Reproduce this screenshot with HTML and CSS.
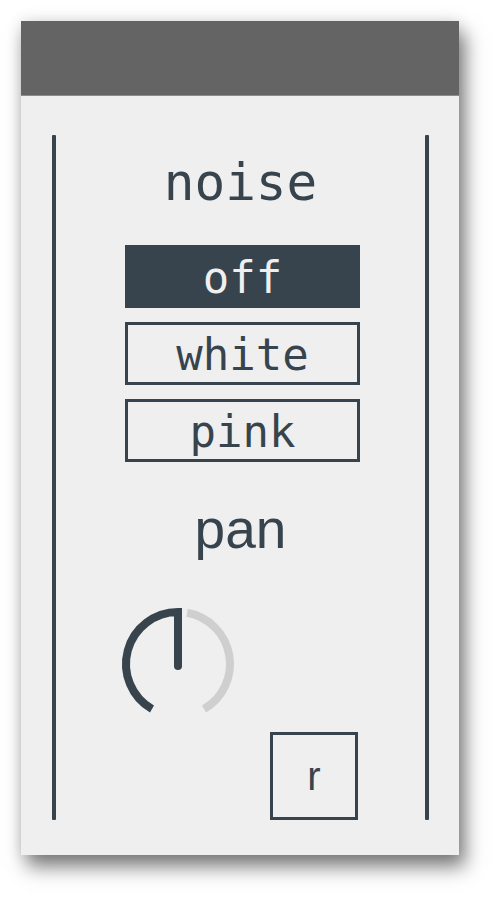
FILE: index.html
```html
<!DOCTYPE html>
<html>
<head>
<meta charset="utf-8">
<link rel="stylesheet" href="styles.css">
</head>
<body>
<div class="window">
  <div class="titlebar"></div>
  <div class="panel">
    <div class="rail"></div>
    <div class="content">
      <div class="label mono">noise</div>
      <div class="choices">
        <div class="choice active">off</div>
        <div class="choice">white</div>
        <div class="choice">pink</div>
      </div>
      <div class="label sans">pan</div>
      <svg class="knob" width="120" height="120" viewBox="0 0 120 120">
        <path d="M69.03 8.79 A52 52 0 0 1 86 105.03" fill="none" stroke="#cfcfcf" stroke-width="8"/>
        <path d="M34 105.03 A52 52 0 0 1 60 8 L60 62" fill="none" stroke="#37444e" stroke-width="8" stroke-linejoin="miter"/>
        <circle cx="60" cy="62" r="4" fill="#37444e"/>
      </svg>
      <div class="reset">r</div>
    </div>
    <div class="rail"></div>
  </div>
</div>
</body>
</html>
```
FILE: styles.css
```css
html, body {
  margin: 0;
  padding: 0;
  background: #ffffff;
}
body {
  padding: 21px 0 44px 21px;
  min-height: 899px;
  box-sizing: border-box;
}
.window {
  width: 438px;
  background: #efefef;
  box-shadow: 6px 12px 18px rgba(0, 0, 0, 0.5), 0 0 14px rgba(0, 0, 0, 0.12);
}
.titlebar {
  height: 74px;
  background: #646464;
  border-bottom: 1px solid #8c8c8c;
}
.panel {
  display: flex;
  padding: 39px 30px 35px 31px;
}
.rail {
  width: 4px;
  background: #37444e;
  border-radius: 1px;
}
.content {
  flex: 1;
  display: flex;
  flex-direction: column;
  color: #37444e;
}
.label {
  text-align: center;
}
.mono {
  font-family: "DejaVu Sans Mono", monospace;
  font-size: 51px;
  line-height: 60px;
  margin-top: 18px;
}
.sans {
  font-family: "Liberation Sans", Arial, sans-serif;
  font-size: 55px;
  line-height: 64px;
  margin-top: 35px;
}
.choices {
  display: flex;
  flex-direction: column;
  gap: 14px;
  margin: 32px 0 0 69px;
  width: 235px;
}
.choice {
  box-sizing: border-box;
  height: 63px;
  border: 3px solid #37444e;
  padding-top: 2px;
  line-height: 55px;
  text-align: center;
  font-family: "DejaVu Sans Mono", monospace;
  font-size: 44px;
  color: #37444e;
}
.choice.active {
  background: #37444e;
  color: #efefef;
}
.knob {
  display: block;
  margin: 43px 0 0 62px;
}
.reset {
  box-sizing: border-box;
  width: 88px;
  height: 88px;
  margin: 8px 0 0 214px;
  border: 3px solid #37444e;
  display: flex;
  align-items: center;
  justify-content: center;
  font-family: "Liberation Sans", Arial, sans-serif;
  font-size: 40px;
  color: #37444e;
}
```
